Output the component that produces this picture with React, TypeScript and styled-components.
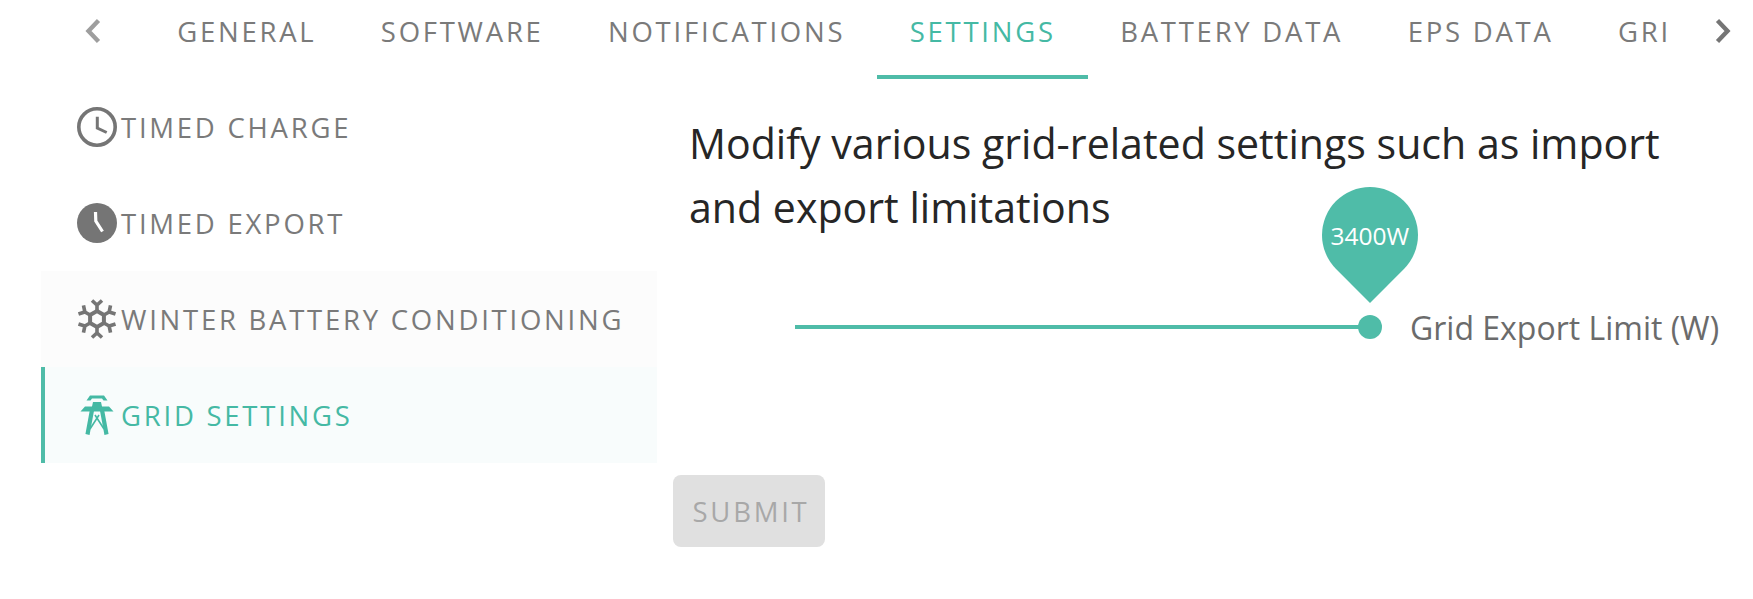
import styled, { createGlobalStyle } from "styled-components";

const TEAL = "#4fbca8";

const GlobalStyle = createGlobalStyle`
  html, body {
    margin: 0;
    padding: 0;
    background: #ffffff;
    font-family: "Open Sans", "Noto Sans", sans-serif;
  }
`;

const Page = styled.div`
  width: 1753px;
  height: 599px;
  overflow: hidden;
`;

const TabBar = styled.div`
  display: flex;
  height: 79px;
  padding-left: 41px;
`;

const ScrollButton = styled.div`
  flex: none;
  width: 104px;
  height: 62px;
  display: flex;
  align-items: center;
  justify-content: center;
`;

const TabScroller = styled.div`
  flex: none;
  width: 1526px;
  display: flex;
  overflow: hidden;
`;

const Tab = styled.div<{ $active?: boolean }>`
  flex: none;
  height: 79px;
  box-sizing: border-box;
  padding: 14px 32.2px 0;
  font-size: 27.5px;
  line-height: 36px;
  letter-spacing: 2.75px;
  color: ${(props) => (props.$active ? "#45b9a4" : "#7a7a7a")};
  border-bottom: 4px solid ${(props) => (props.$active ? TEAL : "transparent")};

  &:last-child {
    padding-right: 0;
  }
`;

const Body = styled.div`
  display: flex;
  padding-left: 41px;
`;

const SideMenu = styled.div`
  flex: none;
  width: 616px;
`;

const SideItem = styled.div<{ $bg?: string; $active?: boolean }>`
  height: 96px;
  box-sizing: border-box;
  display: flex;
  align-items: center;
  gap: 4px;
  padding-left: ${(props) => (props.$active ? "32px" : "36px")};
  background: ${(props) => props.$bg || "transparent"};
  border-left: ${(props) => (props.$active ? `4px solid ${TEAL}` : "none")};
  color: ${(props) => (props.$active ? "#45b9a4" : "#7a7a7a")};
  font-size: 27.5px;
  letter-spacing: 2.75px;
`;

const IconBox = styled.svg`
  flex: none;
  width: 40px;
  height: 40px;
`;

const Main = styled.div`
  flex: 1;
  padding-left: 16px;
`;

const Heading = styled.h2`
  margin: 0;
  padding: 32px 0 0 16px;
  width: 1010px;
  font-size: 41.1px;
  font-weight: 400;
  line-height: 64px;
  color: #262626;
`;

const SliderRow = styled.div`
  display: flex;
  align-items: center;
  height: 34px;
  margin: 71px 0 0 122px;
`;

const Track = styled.div`
  flex: none;
  width: 575px;
  height: 4px;
  background: ${TEAL};
`;

const Thumb = styled.div`
  flex: none;
  position: relative;
  width: 24px;
  height: 24px;
  margin-left: -12px;
  border-radius: 50%;
  background: ${TEAL};
`;

const Bubble = styled.div`
  position: absolute;
  left: -36px;
  top: -128px;
  width: 96px;
  height: 96px;
  border-radius: 50% 50% 0 50%;
  background: ${TEAL};
  transform: rotate(45deg);
  display: flex;
  align-items: center;
  justify-content: center;
`;

const BubbleText = styled.span`
  transform: rotate(-45deg);
  font-size: 24.5px;
  color: #ffffff;
`;

const SliderLabel = styled.span`
  margin-left: 28px;
  font-size: 32px;
  color: #6b6b6b;
  white-space: nowrap;
`;

const SubmitButton = styled.div`
  width: 152px;
  height: 72px;
  box-sizing: border-box;
  padding-left: 4px;
  margin-top: 131px;
  border-radius: 8px;
  background: #e0e0e0;
  color: #a8a8a8;
  font-size: 27.5px;
  letter-spacing: 2.75px;
  display: flex;
  align-items: center;
  justify-content: center;
`;

const tabs = ["GENERAL", "SOFTWARE", "NOTIFICATIONS", "SETTINGS", "BATTERY DATA", "EPS DATA", "GRI"];

const Chevron = ({ left, color }: { left?: boolean; color: string }) => (
  <svg width="16" height="26" viewBox="0 0 16 26">
    <path
      d={left ? "M13.5 2.5 L3.5 13 L13.5 23.5" : "M2.5 2.5 L12.5 13 L2.5 23.5"}
      fill="none"
      stroke={color}
      strokeWidth="4.4"
    />
  </svg>
);

const ClockIcon = () => (
  <IconBox viewBox="0 0 40 40">
    <circle cx="20" cy="20" r="18.2" fill="none" stroke="#757575" strokeWidth="3.6" />
    <path d="M20.3 9.7 V21 L29.7 25.5" fill="none" stroke="#757575" strokeWidth="3" />
  </IconBox>
);

const ClockFilledIcon = () => (
  <IconBox viewBox="0 0 40 40">
    <circle cx="20" cy="20" r="20" fill="#757575" />
    <path d="M18.5 9 L18.8 18 L25.5 28.5" fill="none" stroke="#ffffff" strokeWidth="3.2" />
  </IconBox>
);

const SnowflakeIcon = () => (
  <IconBox viewBox="0 0 40 40">
    <g fill="none" stroke="#757575" strokeWidth="3.6">
      <polygon points="20,12 26.9,16 26.9,24 20,28 13.1,24 13.1,16" strokeWidth="4" />
      {[0, 60, 120, 180, 240, 300].map((angle) => (
        <path key={angle} transform={`rotate(${angle} 20 20)`} d="M20 12 V5 M15 1.5 L20 6 L25 1.5" />
      ))}
    </g>
  </IconBox>
);

const PylonIcon = () => (
  <IconBox viewBox="0 0 40 40">
    <g fill="#45b9a4">
      <path d="M9.5 5.5 L13 0.5 H27 L30.5 5.5 H26.5 L25 3.5 H15 L13.5 5.5 Z" />
      <path d="M3.5 16.5 L8 11.5 H15 L16 7 H24 L25 11.5 H32 L36.5 16.5 Z" />
    </g>
    <g fill="none" stroke="#45b9a4">
      <path d="M15 15 L10.5 39.5 M25 15 L29.5 39.5" strokeWidth="4.2" />
      <path d="M13 34 L22 20 M27 34 L18 20" strokeWidth="1.6" />
    </g>
  </IconBox>
);

const App = () => {
  return (
    <Page>
      <GlobalStyle />
      <TabBar>
        <ScrollButton>
          <Chevron left color="#9e9e9e" />
        </ScrollButton>
        <TabScroller>
          {tabs.map((tab) => (
            <Tab key={tab} $active={tab === "SETTINGS"}>
              {tab}
            </Tab>
          ))}
        </TabScroller>
        <ScrollButton>
          <Chevron color="#757575" />
        </ScrollButton>
      </TabBar>
      <Body>
        <SideMenu>
          <SideItem>
            <ClockIcon />
            TIMED CHARGE
          </SideItem>
          <SideItem>
            <ClockFilledIcon />
            TIMED EXPORT
          </SideItem>
          <SideItem $bg="#fcfcfc">
            <SnowflakeIcon />
            WINTER BATTERY CONDITIONING
          </SideItem>
          <SideItem $bg="#f8fcfc" $active>
            <PylonIcon />
            GRID SETTINGS
          </SideItem>
        </SideMenu>
        <Main>
          <Heading>Modify various grid-related settings such as import and export limitations</Heading>
          <SliderRow>
            <Track />
            <Thumb>
              <Bubble>
                <BubbleText>3400W</BubbleText>
              </Bubble>
            </Thumb>
            <SliderLabel>Grid Export Limit (W)</SliderLabel>
          </SliderRow>
          <SubmitButton>SUBMIT</SubmitButton>
        </Main>
      </Body>
    </Page>
  );
};

export default App;
